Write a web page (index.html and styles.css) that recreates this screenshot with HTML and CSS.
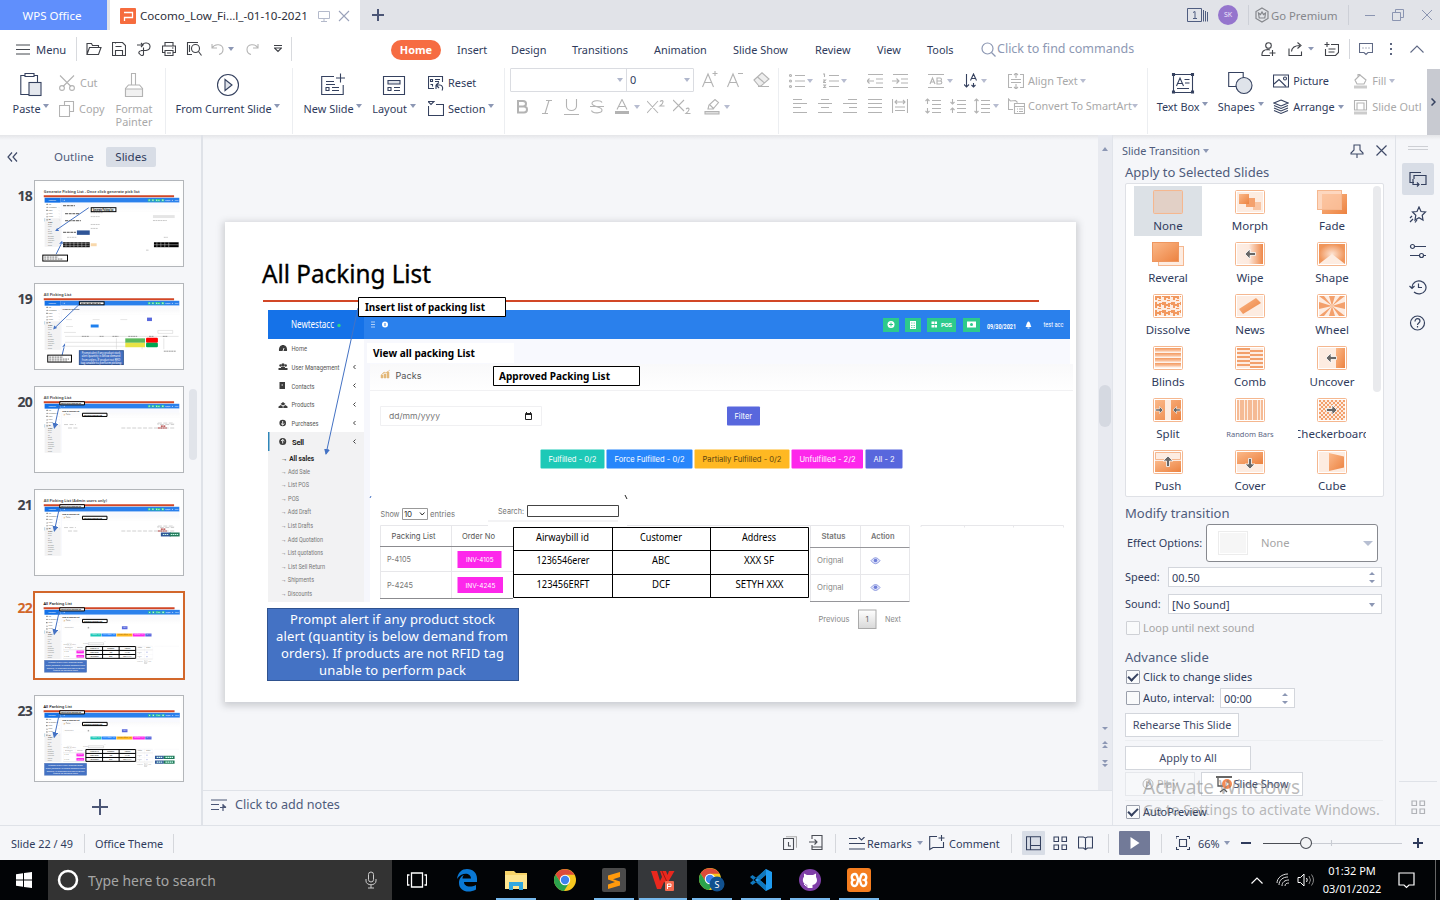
FILE: index.html
```html
<!DOCTYPE html>
<html lang="en">
<head>
<meta charset="utf-8">
<title>WPS Office - Presentation</title>
<link rel="stylesheet" href="styles.css">
</head>
<body>
<header class="titlebar">
  <div class="wps-tab"><span class="t">WPS Office</span></div>
  <div class="doc-tab">
    <svg width="16" height="16" viewBox="0 0 16 16"><rect width="16" height="16" rx="1" fill="#f66c3e"/><path d="M4 4.500h8.500v5H4.500v3.500" fill="none" stroke="#fff" stroke-width="1.300"/></svg>
    <span class="t">Cocomo_Low_Fi...l_-01-10-2021</span>
    <svg width="12" height="12" viewBox="0 0 12 12" fill="none" stroke="#b4bacb"><path d="M.5 1.500h11v7h-11zM6 8.500v3M3 11.500h6"/></svg>
    <svg width="12" height="12" viewBox="0 0 12 12" fill="none" stroke="#9aa2ba" stroke-width="1.100"><path d="M1 1l10 10M11 1L1 11"/></svg>
  </div>
  <svg class="plus-tab" width="12" height="12" viewBox="0 0 12 12" stroke="#4b5676" stroke-width="2"><path d="M0 6h12M6 0v12"/></svg>
  <div class="title-right">
    <svg width="21" height="15" viewBox="0 0 21 15" fill="none" stroke="#4f5d80"><path d="M.5.500h14v13H.500zM16.500 2v11.500M18.500 3v10.500M20.500 4v9.500"/><path d="M6 4.500l2-1v7M6 10.500h4"/></svg>
    <span class="avatar">SK</span>
    <i class="sep"></i>
    <svg width="14" height="16" viewBox="0 0 14 16" fill="none" stroke="#85878c" stroke-width="1.200"><path d="M7 1l6 3.500v7L7 15l-6-3.500v-7z"/><path d="M3.500 6l2 1.500L7 5l1.500 2.500 2-1.500-.7 5H4.200z"/></svg>
    <span class="t prem">Go Premium</span>
    <i class="sep"></i>
    <svg width="68" height="12" viewBox="0 0 68 12" fill="none" stroke="#8b95b1"><path d="M0 6.500h10M27.500 3.500h8v8h-8zM30.500 3.500v-3h8v8h-3M57 1l10 10M67 1L57 11"/></svg>
  </div>
</header>

<nav class="menubar">
  <div class="menu-btn">
    <svg width="14" height="11" viewBox="0 0 14 11" stroke="#45484f"><path d="M0 1h14M0 5.500h14M0 10h14"/></svg>
    <span class="t">Menu</span>
  </div>
  <div class="quick">
    <svg width="16" height="14" viewBox="0 0 16 14"><path d="M1 12.500V1.500h4.500l1 2h6v2M1 12.500l2.500-7h11.500l-2.500 7z"/></svg>
    <svg width="14" height="14" viewBox="0 0 14 14"><path d="M.5.500h10l3 3v10H.500zM3.500 4.500h6M3.500 13V8.500h7V13M3.500 .500v1"/></svg>
    <svg width="15" height="14" viewBox="0 0 15 14"><path d="M1 3h6M5 1l2 2-2 2M7 2.500C7.500 1 9 .8 10.500 1c5 .7 4.500 7-.5 7.500H5M7.500 5.500v7C7 14 4.500 13.700 4 12.200M6.500 8.500c-4 0-4.500 3-2.500 3.500"/></svg>
    <svg width="14" height="14" viewBox="0 0 14 14"><path d="M3 4V.500h8V4M3 10.500H.500v-6.500h13v6.500H11M3 8.500h8v5H3zM5 11h4M10 6h1.500"/></svg>
    <svg width="16" height="14" viewBox="0 0 16 14"><path d="M12 .500H1.500v12H6M3.500 3v7"/><circle cx="9.500" cy="6.500" r="4"/><path d="M12.500 9.500l3 4"/></svg>
    <div class="undo"><svg class="dim" width="13" height="12" viewBox="0 0 13 12"><path d="M1 1v4h5M1 5c3-5 11-4 11 1.500 0 2.500-2 4.500-4 5"/></svg><b class="c"></b></div>
    <svg class="dim" width="13" height="12" viewBox="0 0 13 12"><path d="M12 1v4H7M12 5C9 0 1 1 1 6.500 1 9 3 11 5 11.500"/></svg>
    <svg width="8" height="8" viewBox="0 0 8 8"><path d="M0 .500h8M.5 3L4 6.500 7.500 3z"/></svg>
  </div>
  <div class="tabs">
    <span class="t home">Home</span><span class="t">Insert</span><span class="t">Design</span><span class="t">Transitions</span><span class="t">Animation</span><span class="t">Slide Show</span><span class="t">Review</span><span class="t">View</span><span class="t">Tools</span>
  </div>
  <div class="find">
    <svg width="15" height="15" viewBox="0 0 15 15" fill="none" stroke="#8d98b3" stroke-width="1.200"><circle cx="6.500" cy="6.500" r="5.500"/><path d="M10.500 10.500l4 4"/></svg>
    <span class="t">Click to find commands</span>
  </div>
  <div class="menu-right">
    <svg width="15" height="15" viewBox="0 0 15 15"><circle cx="7.500" cy="3.500" r="2.800"/><path d="M9 13.500H1c-.5-4 2-6 6-6l2 .5M11.500 8v6M8.500 11h6"/></svg>
    <svg width="15" height="14" viewBox="0 0 15 14"><path d="M1 6.500v7h12.500v-4M3.500 9.500C4 5 7 3.500 12 3.500M9.500.500l3.500 3-3.500 3"/></svg>
    <svg class="car" width="6" height="4" viewBox="0 0 6 4"><path d="M0 0h6L3 3.500z"/></svg>
    <svg width="15" height="14" viewBox="0 0 15 14"><path d="M3 0v5M.500 2.500h5M7 2.500h7.500v8l-3 3h-10V7M4.500 7h7M4.500 10h6"/></svg>
    <i class="sep"></i>
    <svg class="slate" width="14" height="13" viewBox="0 0 14 13"><path d="M.500.500h13v9H9l-2 2-2-2H.500z"/><path stroke-dasharray="1 2" d="M3.500 5h8"/></svg>
    <svg class="dots" width="3" height="13" viewBox="0 0 3 13"><path d="M0 0h2v2H0zM0 5h2v2H0zM0 10h2v2H0z"/></svg>
    <svg class="slate" width="14" height="8" viewBox="0 0 14 8"><path d="M.500 7.500L7 1l6.500 6.500"/></svg>
  </div>
</nav>

<section class="ribbon">
  <div class="g g-clip">
    <div class="big">
      <svg width="22" height="24" viewBox="0 0 22 24"><path d="M5 2.500H.800v19H9M14 2.500h3.500V9M5 .500h9v3H5z"/><rect x="9" y="9.500" width="12" height="13" fill="#e5e8ee"/></svg>
      <span class="t">Paste <b class="c"></b></span>
    </div>
    <div class="stack dis">
      <div><svg width="17" height="16" viewBox="0 0 17 16"><path d="M1 .500l11 11M15 .500l-11 11"/><circle cx="3" cy="13" r="2.400"/><circle cx="13" cy="13" r="2.400"/></svg><span class="t">Cut</span></div>
      <div><svg width="16" height="16" viewBox="0 0 16 16"><path d="M5.500 5V.500h9v10H10M.500 4.500h10v11H.500z"/></svg><span class="t">Copy</span></div>
    </div>
    <div class="big dis painter">
      <svg width="20" height="25" viewBox="0 0 20 25"><path d="M7.500 12V.500h4V12M1.500 23.500v-8l3-3.500h11l3 3.500v8z"/><path d="M1.500 16h17v7.500h-17z" fill="#f1f1f1"/></svg>
      <span class="t">Format<br>Painter</span>
    </div>
  </div>
  <div class="g g-play">
    <div class="big">
      <svg width="24" height="24" viewBox="0 0 24 24"><circle cx="12" cy="12" r="10.500"/><path d="M9 6.500v11L16 12z" fill="#dfe3ea"/></svg>
      <span class="t">From Current Slide <b class="c"></b></span>
    </div>
  </div>
  <div class="g g-slides">
    <div class="big">
      <svg width="24" height="24" viewBox="0 0 24 24"><path d="M13 3.500H.700v18h21.500V12M19.500.500v9M15 5h9M5 8.500h8M5 11.500h9M5 14.500h3v3H5zM11 14.500h7M11 17.500h7"/></svg>
      <span class="t">New Slide <b class="c"></b></span>
    </div>
    <div class="big">
      <svg width="24" height="24" viewBox="0 0 24 24"><path d="M1.500 3.500h21v18h-21zM6 14.500h3v3H6zM12 14.500h6M12 17.500h6"/><path d="M6 7.500h12v3.500H6z" fill="#dfe3ea"/></svg>
      <span class="t">Layout <b class="c"></b></span>
    </div>
    <div class="stack">
      <div><svg width="16" height="16" viewBox="0 0 16 16"><path d="M6 13.500H.500V1.500h14V7M2.500 4.500h2v2h-2zM7 4.500h5M7 6.500h4M2.500 9.500h2v2M8 10v4M8 10h4c3 0 3 4 2 5.500M8 10l3-2.500M8 10l3 3"/></svg><span class="t">Reset</span></div>
      <div><svg width="16" height="16" viewBox="0 0 16 16"><path d="M0 .500h6L3 3.500zM8 3.500h8M.500 5v9.500h15V4"/></svg><span class="t">Section <b class="c"></b></span></div>
    </div>
  </div>
  <div class="g g-font">
    <div class="combo"><span><b class="c"></b></span><span class="t">0<b class="c"></b></span></div>
    <div class="r font1 dis">
      <svg width="16" height="18" viewBox="0 0 16 18"><path d="M.500 16L6 3l5.500 13M2.500 11.500h7M13 0v5M10.500 2.500h5"/></svg>
      <svg width="16" height="18" viewBox="0 0 16 18"><path d="M.500 16L6 3l5.500 13M2.500 11.500h7M11 2.500h5"/></svg>
      <svg width="17" height="16" viewBox="0 0 17 16"><path d="M1 8L9 .800 16 7l-8 7H6zM4.500 5l7 6M5 14.500h11" fill="#eee"/></svg>
    </div>
    <div class="r font2 dis">
      <svg width="12" height="14" viewBox="0 0 12 14"><path d="M2 1h5c4 0 4 5.500 0 5.500H2zM2 6.500h6c4 0 4 6 0 6H2z" stroke-width="2"/></svg>
      <svg width="10" height="14" viewBox="0 0 10 14"><path d="M4 .500h6M0 13.500h6M7 .500l-4 13"/></svg>
      <svg width="15" height="16" viewBox="0 0 15 16"><path d="M2.500 0v7c0 6 10 6 10 0V0M0 15.500h15"/></svg>
      <svg width="14" height="14" viewBox="0 0 14 14"><path d="M12 2.500C11 0 2 0 2 3.500S12 6.500 12 10s-9 4-10.500.500M0 6.500h14"/></svg>
      <svg width="14" height="15" viewBox="0 0 14 15"><path d="M2 10.500L7 .500l5 10M3.500 7.500h7"/><path d="M0 13.500h14" stroke-width="3"/></svg>
      <b class="c"></b>
      <svg width="18" height="14" viewBox="0 0 18 14"><path d="M0 1l11 12M11 1L0 13M13 1.500c3-2.500 5 .5 0 4.500h4.500"/></svg>
      <svg width="18" height="15" viewBox="0 0 18 15"><path d="M0 1l11 11M11 1L0 12M13 10c3-2.500 5 .5 0 4.500h4.500"/></svg>
      <svg width="16" height="16" viewBox="0 0 16 16"><path d="M4 10l1-4 6-5.500 3.500 3-5.500 6.500zM6 6l4 4"/><path d="M1 12.500h14v2.500H1z" fill="#ddd"/></svg>
      <b class="c"></b>
    </div>
  </div>
  <div class="g g-para">
    <div class="r para1 dis">
      <svg width="16" height="16" viewBox="0 0 16 16"><path d="M6 2.500h10M6 8h10M6 13.500h10"/><circle cx="1.500" cy="2.500" r="1"/><circle cx="1.500" cy="8" r="1"/><circle cx="1.500" cy="13.500" r="1"/></svg><b class="c"></b>
      <svg width="16" height="16" viewBox="0 0 16 16"><path d="M6 2.500h10M6 8h10M6 13.500h10M0 1h1.500v3M0 7h2.500L0 9.500h3M0 12h2.500l-1 1.300 1 1.200H0"/></svg><b class="c"></b>
      <svg width="16" height="16" viewBox="0 0 16 16"><path d="M1 1.500h15M9 6h7M9 10h7M1 14.500h15M0 8h7M2.500 5.500L0 8l2.500 2.500"/></svg>
      <svg width="16" height="16" viewBox="0 0 16 16"><path d="M1 1.500h15M9 6h7M9 10h7M1 14.500h15M0 8h7M4.500 5.500L7 8l-2.500 2.500"/></svg>
      <svg width="16" height="16" viewBox="0 0 16 16"><path d="M0 1.500h16M0 14.500h16M2 11l2.500-6L7 11M3 9h3M9 5h3c2 0 2 3 0 3H9zM9 8h3c2.500 0 2.500 3 0 3H9z"/></svg><b class="c"></b>
      <svg class="dark" width="14" height="16" viewBox="0 0 14 16"><path d="M2.500 1v13M0 11.500L2.500 14 5 11.500M6.500 7.500L9.500 1l3 6.500M7.500 5.500h4M9.500 10v4M7.500 12l2 2 2-2"/></svg><b class="c"></b>
      <svg width="16" height="16" viewBox="0 0 16 16"><path d="M4 1.500H.500v13H4M12 1.500h3.500v13H12M8 0v5M6 2l2-2 2 2M3 6.500h10M3 9.500h10M8 11v5M6 14l2 2 2-2"/></svg>
      <span class="t">Align Text</span><b class="c"></b>
    </div>
    <div class="r para2 dis">
      <svg width="14" height="14" viewBox="0 0 14 14"><path d="M0 .500h9M0 4.500h14M0 8.500h8M0 13.500h14"/></svg>
      <svg width="14" height="14" viewBox="0 0 14 14"><path d="M3 .500h8M0 4.500h14M3 8.500h8M0 13.500h14"/></svg>
      <svg width="14" height="14" viewBox="0 0 14 14"><path d="M5 .500h9M0 4.500h14M6 8.500h8M0 13.500h14"/></svg>
      <svg width="14" height="14" viewBox="0 0 14 14"><path d="M0 .500h14M0 4.500h14M0 8.500h14M0 13.500h14"/></svg>
      <svg width="16" height="14" viewBox="0 0 16 14"><path d="M.500 0v14M15.500 0v14M3 3h10M5 1L3 3l2 2M11 1l2 2-2 2M3 8h10M3 11.500h10"/></svg>
      <svg width="16" height="16" viewBox="0 0 16 16"><path d="M7 2.500h9M7 6.500h9M7 10.500h9M7 14.500h9M2.500 1v5M.500 3l2-2 2 2M2.500 10v5M.500 13l2 2 2-2"/></svg>
      <svg width="16" height="16" viewBox="0 0 16 16"><path d="M7 2.500h9M7 6.500h9M7 10.500h9M7 14.500h9M2.500 1v5M.500 4l2 2 2-2M2.500 10v5M.500 12l2-2 2 2"/></svg>
      <svg width="16" height="16" viewBox="0 0 16 16"><path d="M7 2.500h9M7 6.500h9M7 10.500h9M7 14.500h9M2.500 1v14M.500 3l2-2 2 2M.500 13l2 2 2-2"/></svg><b class="c"></b>
      <svg width="17" height="16" viewBox="0 0 17 16"><path d="M5 11.500H.500V1l2 2 5-.500 2 2M6.500 5.500h10v10h-10zM6.500 8.500h10M9 11h1M11 11h4M9 13.500h1M11 13.500h4"/></svg>
      <span class="t">Convert To SmartArt</span><b class="c"></b>
    </div>
  </div>
  <div class="g g-draw">
    <div class="big">
      <svg width="24" height="24" viewBox="0 0 24 24"><path d="M2.500 3.500h19v18h-19zM1.500 2.500h2v2h-2zM20.500 2.500h2v2h-2zM1.500 20h2v2h-2zM20.500 20h2v2h-2zM5.500 15L9 7l3.500 8M6.500 12.500h5M13.500 8.500h5M14 12h4.500M6 17.500h12"/></svg>
      <span class="t">Text Box <b class="c"></b></span>
    </div>
    <div class="big">
      <svg width="25" height="24" viewBox="0 0 25 24"><path d="M.700 1.500h14.500v14H.700z"/><circle cx="16" cy="14.500" r="8" fill="#dfe3ea"/></svg>
      <span class="t">Shapes <b class="c"></b></span>
    </div>
    <div class="stack">
      <div><svg width="16" height="14" viewBox="0 0 16 14"><path d="M.500 1h15v12H.500z"/><circle cx="12" cy="4.500" r="1.500"/><path d="M1 10l5-4.500 7 7"/></svg><span class="t">Picture</span></div>
      <div><svg width="16" height="16" viewBox="0 0 16 16"><path d="M8 1l7 3-7 3-7-3zM1 6.500l7 3 7-3M1 9l7 3 7-3M1 11.500l7 3 7-3"/></svg><span class="t">Arrange <b class="c m"></b></span></div>
    </div>
    <div class="stack dis out">
      <div><svg width="15" height="16" viewBox="0 0 15 16"><path d="M2 7l5-5 6 5-2 4H4zM5 4V1.500h2.500"/><path d="M1 14h13" stroke-width="3" stroke="#ccc"/></svg><span class="t">Fill <b class="c m"></b></span></div>
      <div><svg width="15" height="16" viewBox="0 0 15 16"><path d="M1.500 11V1.500h12V11M4 11V4h7v7M1 11h13"/><path d="M1 14h13" stroke-width="3" stroke="#ccc"/></svg><span class="t">Slide Outl</span></div>
    </div>
  </div>
  <div class="more"><svg width="5" height="8" viewBox="0 0 5 8"><path d="M.500.500L4 4 .500 7.500" stroke-width="1.500"/></svg></div>
</section>

<main class="main">
  <aside class="left">
    <div class="left-head">
      <svg width="11" height="10" viewBox="0 0 11 10" fill="none" stroke="#3f4a68" stroke-width="1.200"><path d="M5 .500L1 5l4 4.500M10 .500L6 5l4 4.500"/></svg>
      <span class="t">Outline</span><span class="t on">Slides</span>
    </div>
    <div class="thumbs">
      <div class="th"><b>18</b><svg viewBox="0 0 145 82"><rect width="145" height="82" fill="#fff"/><g transform="scale(.17) translate(-225 -222)"><use href="#base"/></g>
        <text x="6.500" y="10" font-size="4" textLength="97" lengthAdjust="spacingAndGlyphs" font-weight="bold" fill="#555">Generate Picking List -  Once click generate pick list</text>
        <path d="M52 25L20 47M19 72l5-10" stroke="#4472c4" fill="none"/><path d="M18 48.500l2-3 2 3zM22 61.500h4l-1-3z" fill="#4472c4"/>
        <rect x="26" y="60" width="27" height="5"/><rect x="118" y="60" width="25" height="5"/><path d="M26 61.500h27M26 63.500h27M118 62.500h25M29 60v5M33 60v5M37 60v5M41 60v5M45 60v5M49 60v5M121 60v5M125 60v5M129 60v5M133 60v5" stroke="#ddd" stroke-width=".5"/><rect x="40" y="48" width="13" height="4.500" fill="#2f5597"/>
        <path d="M26 23h12M28 31h15M28 38h16M26 50h13" stroke="#777" stroke-width="1.300" stroke-dasharray="3 .7"/><path d="M54 34h9M54 42h9M54 46h7M54 30h12M117 38h14M30 55h10M128 55h4M110 68h3" stroke="#bbb" stroke-dasharray="2 .5" stroke-width=".8"/><path d="M117 34h22" stroke="#e5e5e5" stroke-width="3"/><rect x="54" y="61" width="6" height="3" fill="#f8d8ac"/>
        <rect x="54.500" y="25" width="25" height="4" fill="#fff" stroke="#000"/><rect x="5.500" y="73" width="25" height="6" fill="#fff" stroke="#000"/><text x="56" y="28.300" font-size="3" font-weight="bold" textLength="21" lengthAdjust="spacingAndGlyphs">Generate Picking list</text><path d="M7 75h14M7 77h19" stroke="#555" stroke-dasharray="2 .7" stroke-width=".8"/></svg></div>
      <div class="th"><b>19</b><svg viewBox="0 0 145 82"><rect width="145" height="82" fill="#fff"/><g transform="scale(.17) translate(-225 -222)"><use href="#base"/></g>
        <text x="6.500" y="10" font-size="4" font-weight="bold" textLength="28" lengthAdjust="spacingAndGlyphs" fill="#555">All Picking List</text><text x="25.500" y="24" font-size="2.500" font-weight="bold" textLength="17" lengthAdjust="spacingAndGlyphs" fill="#333">View all picking</text>
        <path d="M43 18L18 42M25 70l2-8" stroke="#4472c4"/><path d="M16 44l1-4 3 2.500zM25 62l3-1v-3z" fill="#4472c4"/>
        <rect x="42.500" y="16" width="25" height="3" fill="#fff" stroke="#000"/><path d="M44 17.500h20" stroke="#333" stroke-dasharray="3 .7" stroke-width=".8"/>
        <rect x="111" y="32" width="5" height="3.500" fill="#5867dd"/><rect x="54" y="39" width="8" height="3" fill="#1f80ee"/><path d="M29 34h6M56 34h7M84 34h7M29 41h7M27 47h12M28 51h115M122 45h15v3h-15zM80 53v11M106 53v11M128 53v11M28 57h62M28 61h62" stroke="#ccc" stroke-width=".5" fill="none"/>
        <path d="M45 51h7M63 51h4M76 51h6M92 51h9M113 51h5M127 51h5M128 66h12" stroke="#999" stroke-dasharray="2 .5"/><rect x="89" y="53" width="20" height="4.500" fill="#5cb85c"/><rect x="89" y="57.500" width="20" height="4.500" fill="#e8e345"/><rect x="110" y="52.500" width="12" height="5" rx="1" fill="#f00"/><rect x="110" y="57.500" width="12" height="4.500" rx="1" fill="#00a651"/>
        <rect x="10.500" y="70" width="24" height="7" fill="#fff" stroke="#000"/><path d="M12 72h14M12 74h20M12 76h18" stroke="#555" stroke-dasharray="2 .7" stroke-width=".8"/><rect x="42.500" y="65.500" width="44.500" height="14" fill="#4472c4" stroke="#2f528f"/><g fill="#fff" font-size="2.600"><text x="45" y="69" textLength="39" lengthAdjust="spacingAndGlyphs">Prompt alert if any product stock</text><text x="45" y="72.300" textLength="39" lengthAdjust="spacingAndGlyphs">alert quantity is below demand</text><text x="45" y="75.600" textLength="39" lengthAdjust="spacingAndGlyphs">from orders. If product not RFID</text><text x="44" y="78.900" textLength="41" lengthAdjust="spacingAndGlyphs">tag unable to perform picking</text></g></svg></div>
      <div class="th"><b>20</b><svg viewBox="0 0 145 82"><rect width="145" height="82" fill="#fff"/><g id="th20"><g transform="scale(.17) translate(-225 -222)"><use href="#base"/><use href="#callouts"/></g>
        <path d="M27 36h12M85 39.500h55M31 39.500h10M122 34.500h16v1.500h-16z" stroke="#bbb" stroke-width=".7" stroke-dasharray="4 1.500" fill="none"/><path d="M122 39.500h9M125 37.500h5" stroke="#a33" stroke-width="1.200" stroke-dasharray="2 .5"/></g><text x="6.500" y="10" font-size="4" font-weight="bold" textLength="28" lengthAdjust="spacingAndGlyphs" fill="#555">All Picking List</text></svg></div>
      <div class="th"><b>21</b><svg viewBox="0 0 145 82"><rect width="145" height="82" fill="#fff"/><use href="#th20"/><text x="6.500" y="10" font-size="4" font-weight="bold" textLength="64" lengthAdjust="spacingAndGlyphs" fill="#555">All Picking List (Admin users only)</text><rect x="125" y="41" width="10" height="4" fill="#2f5597"/><rect x="134" y="41" width="10" height="4" fill="#217a5a"/><path d="M127 43h6M135 43h8" stroke="#cfe" stroke-dasharray="1.500 .5"/></svg></div>
      <div class="th sel"><b>22</b><svg viewBox="225 222 851 480"><use href="#slide"/></svg></div>
      <div class="th"><b>23</b><svg viewBox="225 222 851 480"><use href="#slide"/><path d="M923 564h52v20h-52zM923 592h52v20h-52z" fill="#2f5597"/><path d="M975 564h64v20h-64zM975 592h64v20h-64z" fill="#217a5a"/><path d="M933 574h35M985 574h48M933 602h35M985 602h48" stroke="#cfe" stroke-width="7" stroke-dasharray="9 3"/></svg></div>
    </div>
    <i class="left-scroll"></i>
    <svg class="add-slide" width="16" height="16" viewBox="0 0 16 16" stroke="#4b5676" stroke-width="2"><path d="M0 8h16M8 0v16"/></svg>
  </aside>

  <section class="center">
    <div class="stage">
      <div class="canvas">
        <svg class="slide" width="851" height="480" viewBox="225 222 851 480">
          <defs><marker id="ah" viewBox="0 0 6 6" refX="5" refY="3" markerWidth="6" markerHeight="6" orient="auto"><path d="M0 0l6 3-6 3z" fill="#4472c4"/></marker>
          <linearGradient id="pg" x2="0" y2="1"><stop stop-color="#fff"/><stop offset="1" stop-color="#d8d8d8"/></linearGradient>
          <linearGradient id="hg" x2="0" y2="1"><stop stop-color="#f9f9fa"/><stop offset="1" stop-color="#fff"/></linearGradient></defs>
          <g id="slide">
            <rect x="225" y="222" width="851" height="480" fill="#fff"/>
            <text class="ns" x="262" y="283" font-size="25.500" textLength="169" lengthAdjust="spacingAndGlyphs" stroke="#000" stroke-width=".35">All Packing List</text>
            <g id="base">
              <path d="M263 301h776" stroke="#d24726" stroke-width="2" vector-effect="non-scaling-stroke"/>
              <rect x="268" y="310" width="96" height="29" fill="#1572e8"/><rect x="364" y="310" width="706" height="29" fill="#2a80ec"/>
              <rect x="364" y="339" width="706" height="25" fill="#f8f9fe"/>
              <rect x="370" y="364" width="703" height="28" fill="url(#hg)"/><path d="M370 390.500h703" stroke="#f1f1f3"/>
              <path d="M364 339h6v263h-6z" fill="#f6f7fc"/>
              <g class="rb" fill="#fff"><text class="ns" x="291" y="328" font-size="10.500" textLength="43" lengthAdjust="spacingAndGlyphs">Newtestacc</text><circle cx="339" cy="325.500" r="1.700" fill="#2fd18a"/>
              <path d="M371 322h4M371 324.500h4M371 327h4" stroke="#d4e5fb" stroke-width=".8"/><circle cx="385" cy="324.500" r="3"/><path d="M385 323v3" stroke="#2a80ec"/></g>
              <g fill="#2dca8c"><path d="M883 318h16v14h-16zM905 318h16v14h-16zM927 318h29v14h-29zM963 318h17v14h-17z"/></g>
              <circle cx="891" cy="324.500" r="3.500" fill="#fff"/><path d="M889 324.500h4M891 322.500v4" stroke="#2dca8c"/><rect x="910" y="321" width="6" height="8" fill="#fff"/><path d="M911 323h4M911 325.500h4M911 327.500h4" stroke="#2dca8c" stroke-width=".7" stroke-dasharray="1 .5"/>
              <path d="M931.500 321.500h2.500v2.500h-2.500zM934.500 321.500h2.500v2.500h-2.500zM931.500 325h2.500v2.500h-2.500zM934.500 325h2.500v2.500h-2.500z" fill="#fff"/><rect x="967" y="321.500" width="9" height="6" fill="#fff"/><circle cx="971.500" cy="324.500" r="1.500" fill="#2dca8c"/>
              <g class="rb" fill="#fff"><text x="941" y="327" font-size="6" textLength="11" font-weight="bold">POS</text><text x="987" y="328.500" font-size="7" font-weight="bold" textLength="29" lengthAdjust="spacingAndGlyphs">09/30/2021</text><path d="M1025.500 327c1-1 1-5 3-5.500 2 .5 2 4.500 3 5.500zM1027.500 327.500h2v1h-2z"/><text x="1043.500" y="327" font-size="7.500" textLength="20" lengthAdjust="spacingAndGlyphs">test acc</text></g>
              <rect x="268" y="432" width="96" height="170" fill="#f2f2f3"/><rect x="268" y="432" width="1.500" height="19" fill="#2f86b9"/>
              <g class="rb" fill="#555" font-size="7.500">
                <text x="291.500" y="351" textLength="15.500" lengthAdjust="spacingAndGlyphs">Home</text><text x="291.500" y="370" textLength="48" lengthAdjust="spacingAndGlyphs">User Management</text><text x="291.500" y="388.500" textLength="23" lengthAdjust="spacingAndGlyphs">Contacts</text><text x="291.500" y="407" textLength="23" lengthAdjust="spacingAndGlyphs">Products</text><text x="291.500" y="426" textLength="27" lengthAdjust="spacingAndGlyphs">Purchases</text><text x="292" y="444.500" textLength="12" font-weight="bold" fill="#222">Sell</text>
              </g>
              <g class="rb" fill="#777" font-size="7">
                <text x="281" y="461" fill="#222" font-weight="bold" textLength="33" lengthAdjust="spacingAndGlyphs">→ All sales</text><text x="281" y="473.500" textLength="29" lengthAdjust="spacingAndGlyphs">→ Add Sale</text><text x="281" y="487" textLength="28" lengthAdjust="spacingAndGlyphs">→ List POS</text><text x="281" y="500.500" textLength="18" lengthAdjust="spacingAndGlyphs">→ POS</text><text x="281" y="514" textLength="30" lengthAdjust="spacingAndGlyphs">→ Add Draft</text><text x="281" y="528" textLength="32" lengthAdjust="spacingAndGlyphs">→ List Drafts</text><text x="281" y="541.500" textLength="42" lengthAdjust="spacingAndGlyphs">→ Add Quotation</text><text x="281" y="555" textLength="42" lengthAdjust="spacingAndGlyphs">→ List quotations</text><text x="281" y="568.500" textLength="44" lengthAdjust="spacingAndGlyphs">→ List Sell Return</text><text x="281" y="582" textLength="33" lengthAdjust="spacingAndGlyphs">→ Shipments</text><text x="281" y="595.500" textLength="31" lengthAdjust="spacingAndGlyphs">→ Discounts</text>
              </g>
              <g fill="#3c3c3c"><path d="M279 351c-1-8 9-8 8 0z"/><circle cx="283" cy="365" r="1.700"/><circle cx="280.500" cy="365.500" r="1.200"/><circle cx="285.700" cy="365.500" r="1.200"/><path d="M278.500 370v-2h9v2zM281 370v-3h4v3zM279.500 382h5.500v7h-5.500zM280.500 404l2.500-2 2.500 2-2.500 1.500zM278.500 406.500l2.300-1.500 2 1.500v1.500h-4.300zM283.300 406.500l2-1.500 2.200 1.500v1.500h-4.200z"/><circle cx="282.700" cy="423" r="3.300"/><circle cx="282.700" cy="441.500" r="3.500"/></g>
              <path d="M282.700 421v4M281 423.500l1.700 1.500 1.700-1.500M282.700 443.500v-4M281 441l1.700-1.500 1.700 1.500M281.500 385h1.500M283 351l1-3" stroke="#fff" fill="none" stroke-width=".9"/>
              <path d="M355.500 365l-2 2 2 2M355.500 383.500l-2 2 2 2M355.500 402.500l-2 2 2 2M355.500 421l-2 2 2 2M355.500 439.500l-2 2 2 2" fill="none" stroke="#444"/>
            </g>
            <g id="callouts">
              <path d="M358 308L326 454" stroke="#4472c4" marker-end="url(#ah)" vector-effect="non-scaling-stroke"/>
              <rect x="367" y="343" width="147" height="20" fill="#fff"/>
              <path d="M358.500 297.500h147v19h-147zM493.500 366.500h146v19h-146z" fill="#fff" stroke="#000" vector-effect="non-scaling-stroke"/>
              <g class="ns" font-size="11" font-weight="bold"><text x="365" y="311" textLength="120" lengthAdjust="spacingAndGlyphs">Insert list of packing list</text><text x="373" y="357" textLength="102" lengthAdjust="spacingAndGlyphs">View all packing List</text><text x="499" y="380" textLength="111" lengthAdjust="spacingAndGlyphs">Approved Packing List</text></g>
              <path d="M381 378v-3h2v3zM384 378v-4h2v4zM387 378v-6h2v6zM381 375l3-3 2 1 4-3" fill="#e3b878" stroke="#e3b878" stroke-width=".5"/><text class="it" x="395.500" y="378.500" font-size="9" fill="#555" textLength="26" lengthAdjust="spacingAndGlyphs">Packs</text>
            </g>
            <path d="M380.500 406.500h161v19h-161z" fill="none" stroke="#f0f0f2"/>
            <text class="it" x="389" y="419" font-size="8" fill="#777" textLength="51" lengthAdjust="spacingAndGlyphs">dd/mm/yyyy</text>
            <path d="M525.500 413.500h6v6h-6zM525.500 414.500h6M526.500 412v1M530.500 412v1" fill="none" stroke="#222"/>
            <rect x="727" y="406.500" width="33" height="19" rx="1" fill="#5867dd"/><text class="it" x="734.500" y="419" font-size="8" fill="#fff" textLength="17.500" lengthAdjust="spacingAndGlyphs">Filter</text>
            <rect x="540.500" y="449.500" width="64" height="19" rx="1" fill="#1dc9b7"/><rect x="606.500" y="449.500" width="86" height="19" rx="1" fill="#2786fb"/><rect x="694.500" y="449.500" width="95" height="19" rx="1" fill="#ffb822"/><rect x="791.500" y="449.500" width="71.500" height="19" rx="1" fill="#fd27eb"/><rect x="865.500" y="449.500" width="37" height="19" rx="1" fill="#5867dd"/>
            <g class="it" font-size="7.500" fill="#fff"><text x="548.500" y="461.500" textLength="48" lengthAdjust="spacingAndGlyphs">Fulfilled - 0/2</text><text x="614.500" y="461.500" textLength="70" lengthAdjust="spacingAndGlyphs">Force Fulfilled - 0/2</text><text x="702.500" y="461.500" fill="#5b430f" textLength="79" lengthAdjust="spacingAndGlyphs">Partially Fulfilled - 0/2</text><text x="799.500" y="461.500" textLength="56" lengthAdjust="spacingAndGlyphs">Unfulfilled - 2/2</text><text x="873.500" y="461.500" textLength="21" lengthAdjust="spacingAndGlyphs">All - 2</text></g>
            <g class="it" font-size="8" fill="#777"><text x="380.500" y="516.500" textLength="19" lengthAdjust="spacingAndGlyphs">Show</text><text x="404" y="516.500" textLength="8" fill="#333">10</text><text x="430" y="516.500" textLength="25" lengthAdjust="spacingAndGlyphs">entries</text><text x="498" y="513.500" textLength="26" lengthAdjust="spacingAndGlyphs">Search:</text>
            <text x="391.500" y="538.500" textLength="44" lengthAdjust="spacingAndGlyphs" fill="#555">Packing List</text><text x="462" y="538.500" textLength="33" lengthAdjust="spacingAndGlyphs" fill="#555">Order No</text><text x="387" y="562" textLength="24" lengthAdjust="spacingAndGlyphs">P-4105</text><text x="387" y="587.500" textLength="26" lengthAdjust="spacingAndGlyphs">P-4245</text></g>
            <path d="M402.500 508.500h25v11h-25z" fill="none" stroke="#999"/><path d="M420 512.500l2.200 2.500 2.300-2.500M625 495l2 4" fill="none" stroke="#222"/><path d="M527.500 505.500h91v11h-91z" fill="#fff" stroke="#444"/><path d="M370 498l1-2" stroke="#4472c4"/>
            <path d="M380.500 598V525.500H488M451.500 525.500V598M380.500 571.500H513M488 521h130M627 525.500h280M921 527v-1.500h142.500v2M964.500 525.500v2M1013.500 525.500v2" fill="none" stroke="#e7e7ea"/><path d="M380 546.500h133M380 598.500h133" stroke="#8b8b8f"/>
            <rect x="457.500" y="551" width="44" height="17" fill="#fd27eb"/><rect x="457.500" y="577" width="45.500" height="16" fill="#fd27eb"/><g class="it" fill="#fff" font-size="6.500"><text x="466" y="561.500" textLength="27.500" lengthAdjust="spacingAndGlyphs">INV-4105</text><text x="465.500" y="587.500" textLength="30" lengthAdjust="spacingAndGlyphs">INV-4245</text></g>
            <path d="M513.500 527.500h295v70h-295zM513.500 550.500h295M513.500 574.500h295M612.500 527.500v70M710.500 527.500v70" fill="#fff" stroke="#000" vector-effect="non-scaling-stroke"/>
            <g class="ns" font-size="10.300"><text x="536" y="540.500" textLength="53" lengthAdjust="spacingAndGlyphs">Airwaybill id</text><text x="640" y="540.500" textLength="42" lengthAdjust="spacingAndGlyphs">Customer</text><text x="742" y="540.500" textLength="34" lengthAdjust="spacingAndGlyphs">Address</text><text x="536.500" y="563.500" textLength="53" lengthAdjust="spacingAndGlyphs">1236546erer</text><text x="652" y="563.500" textLength="18" lengthAdjust="spacingAndGlyphs">ABC</text><text x="744" y="563.500" textLength="30" lengthAdjust="spacingAndGlyphs">XXX SF</text><text x="536.500" y="587.500" textLength="53" lengthAdjust="spacingAndGlyphs">123456ERFT</text><text x="652" y="587.500" textLength="18" lengthAdjust="spacingAndGlyphs">DCF</text><text x="735.500" y="587.500" textLength="48" lengthAdjust="spacingAndGlyphs">SETYH XXX</text></g>
            <path d="M810.500 525.500V601M860.500 525.500V601M909.500 525.500V601M810 574.500h99M810 525.500h99" stroke="#e7e7ea" fill="none"/><path d="M810 547.500h99.500M810 601.500h99.500" stroke="#96969a"/>
            <g class="it" font-size="7.500" fill="#888"><text x="821.500" y="539" font-weight="600" fill="#777" textLength="24" lengthAdjust="spacingAndGlyphs">Status</text><text x="871" y="539" font-weight="600" fill="#777" textLength="23.500" lengthAdjust="spacingAndGlyphs">Action</text><text x="817" y="563" textLength="26.500" lengthAdjust="spacingAndGlyphs">Orignal</text><text x="817" y="590" textLength="26.500" lengthAdjust="spacingAndGlyphs">Orignal</text><text x="818.500" y="622" textLength="31" lengthAdjust="spacingAndGlyphs">Previous</text><text x="885" y="622" textLength="16" lengthAdjust="spacingAndGlyphs">Next</text></g>
            <path d="M871 560.700q4.500-6 9 0q-4.500 6-9 0zM871 587.500q4.500-6 9 0q-4.500 6-9 0z" fill="#dfe3fa" stroke="#8f9bdf"/><circle cx="875.500" cy="560.500" r="1.800" fill="#6f7fd8"/><circle cx="875.500" cy="587.300" r="1.800" fill="#6f7fd8"/>
            <rect x="858.500" y="610" width="17.500" height="18.500" fill="url(#pg)" stroke="#aaa"/><text class="it" x="865.500" y="622" font-size="7.500" fill="#666">1</text>
            <rect x="267.500" y="608.500" width="251" height="72" fill="#4472c4" stroke="#2f528f"/>
            <g class="ns" font-size="13" fill="#fff"><text x="290" y="624" textLength="205">Prompt alert if any product stock</text><text x="276" y="641" textLength="232">alert (quantity is below demand from</text><text x="281" y="658" textLength="223">orders). If products are not RFID tag</text><text x="319" y="675" textLength="147">unable to perform pack</text></g>
          </g>
        </svg>
      </div>
      <div class="vscroll">
        <svg width="6" height="4" viewBox="0 0 6 4"><path d="M0 4h6L3 0z"/></svg>
        <i></i>
        <svg class="dn" width="6" height="3" viewBox="0 0 6 3"><path d="M0 0h6L3 3z"/></svg>
        <svg class="pg" width="6" height="8" viewBox="0 0 6 8"><path d="M0 3h6L3 0zM0 7h6L3 4z"/></svg>
        <svg class="pg" width="6" height="8" viewBox="0 0 6 8"><path d="M0 0h6L3 3zM0 4h6L3 7z"/></svg>
      </div>
    </div>
    <div class="notes">
      <svg width="16" height="12" viewBox="0 0 16 12" fill="none" stroke="#4b5676" stroke-width="1.200"><path d="M0 1h16M0 5.500h8M0 10.500h8M9 8.500h6M12 6l3 2.500M12 5v7"/></svg>
      <span class="t">Click to add notes</span>
    </div>
  </section>

  <aside class="panel">
    <div class="p-title"><span class="t">Slide Transition <b class="c m"></b></span>
      <svg width="14" height="14" viewBox="0 0 14 14" fill="none" stroke="#3f4a68" stroke-width="1.100"><path d="M4 1h6v5l3 3v1H1V9l3-3zM7 10v4"/></svg>
      <svg width="11" height="11" viewBox="0 0 11 11" stroke="#3f4a68" stroke-width="1.200"><path d="M.500.500l10 10M10.500.500l-10 10"/></svg>
    </div>
    <h2 class="t h-apply">Apply to Selected Slides</h2>
    <div class="gallery">
      <svg width="0" height="0" class="defs"><defs>
        <linearGradient id="o" x2="1" y2="1"><stop stop-color="#fbb98a"/><stop offset="1" stop-color="#ec8240"/></linearGradient>
        <linearGradient id="or"><stop stop-color="#fdeee5"/><stop offset=".45" stop-color="#fdeadf"/><stop offset="1" stop-color="#ee8748"/></linearGradient>
        <linearGradient id="bl" x2="0" y2=".25" spreadMethod="repeat"><stop stop-color="#f3995f"/><stop offset=".5" stop-color="#f9be98"/><stop offset="1" stop-color="#fff"/></linearGradient>
        <radialGradient id="rad"><stop stop-color="#fde3d3"/><stop offset="1" stop-color="#f0955a"/></radialGradient>
        <pattern id="ck" width="4" height="4" patternUnits="userSpaceOnUse"><path d="M0 0h2v2H0zM2 2h2v2H2z" fill="#f2a06c"/></pattern>
        <pattern id="dz" width="9" height="8" patternUnits="userSpaceOnUse"><path d="M0 0h4v2h2v2H4v2H2V3H0zM6 1h3v1H8v3H6zM5 6h3v1H5z" fill="#f2985e"/></pattern>
        <g id="fr"><rect x=".500" y=".500" width="29" height="23" rx="1" fill="#fff" stroke="#f5b78f"/><rect x="2" y="2" width="26" height="20" fill="#fdece1"/></g>
        <path id="al" d="M0 0l5-5v3.500h5.500v3H5V5z" fill="#686868" stroke="#fff" stroke-width=".8"/>
      </defs></svg>
      <div class="fx">
        <div class="on"><svg width="30" height="24"><rect x=".500" y=".500" width="29" height="23" rx="1" fill="#e3cfc3" stroke="#f5b78f"/><rect x="2" y="2" width="26" height="20" fill="#e2d0c6"/></svg><span class="t">None</span></div>
        <div><svg width="30" height="24"><use href="#fr"/><path d="M18 12h8v8h-8z" fill="#f9c5a3"/><path d="M11 8h9v9h-9z" fill="#f4a16d"/><path d="M4 4h10v10H4z" fill="url(#o)"/></svg><span class="t">Morph</span></div>
        <div><svg width="30" height="24"><rect x="5" y="4" width="25" height="20" fill="url(#o)"/><rect x=".500" y=".500" width="24" height="19" fill="#fcc9a9" fill-opacity=".75" stroke="#f5b78f"/></svg><span class="t">Fade</span></div>
        <div><svg width="32" height="24"><rect x="6.500" y="4.500" width="25" height="19" fill="#fdece1" stroke="#f5b78f"/><rect x=".500" y=".500" width="26" height="19" fill="url(#o)" stroke="#ee965f"/></svg><span class="t">Reveral</span></div>
        <div><svg width="30" height="24"><use href="#fr"/><rect x="2" y="2" width="26" height="20" fill="url(#or)"/><use href="#al" x="10" y="12"/></svg><span class="t">Wipe</span></div>
        <div><svg width="30" height="24"><use href="#fr"/><rect x="2" y="2" width="26" height="20" fill="url(#rad)"/><path d="M2 22l13-10 13 10z" fill="#fdece1"/></svg><span class="t">Shape</span></div>
        <div><svg width="30" height="24"><use href="#fr"/><rect x="2" y="2" width="26" height="20" fill="url(#dz)"/></svg><span class="t">Dissolve</span></div>
        <div><svg width="30" height="24"><use href="#fr"/><path d="M4 15L21 4l5 5L8 20z" fill="url(#o)"/></svg><span class="t">News</span></div>
        <div><svg width="30" height="24"><use href="#fr"/><path d="M15 12L2 2h5zM15 12L12 2h6zM15 12l8-10h5zM15 12l13-4v7zM15 12l13 10h-6zM15 12l3 10h-6zM15 12L7 22H2zM15 12L2 15V8z" fill="#f3a06c"/></svg><span class="t">Wheel</span></div>
        <div><svg width="30" height="24"><use href="#fr"/><rect x="2" y="2" width="26" height="20" fill="url(#bl)"/></svg><span class="t">Blinds</span></div>
        <div><svg width="30" height="24"><use href="#fr"/><path d="M2 3h13M2 7h13M2 11h13M2 15h13M2 19h13M15 5h13M15 9h13M15 13h13M15 17h13M15 21h13" stroke="#f2a06c" stroke-width="2"/></svg><span class="t">Comb</span></div>
        <div><svg width="30" height="24"><use href="#fr"/><rect x="19" y="2" width="9" height="20" fill="url(#o)"/><use href="#al" x="9" y="12"/></svg><span class="t">Uncover</span></div>
        <div><svg width="30" height="24"><use href="#fr"/><path d="M2 2h10v20H2zM18 2h10v20H18z" fill="url(#o)"/><use href="#al" transform="translate(20 12) scale(.7)"/><use href="#al" transform="translate(10 12) scale(-.7)"/></svg><span class="t">Split</span></div>
        <div><svg width="30" height="24"><use href="#fr"/><path d="M3 2v20M6 2v20M8 2v20M11 2v20M14 2v20M16 2v20M19 2v20M21 2v20M24 2v20M27 2v20" stroke="#f2a06c" stroke-width="1.300"/></svg><span class="t tiny">Random Bars</span></div>
        <div><svg width="30" height="24"><use href="#fr"/><rect x="2" y="2" width="26" height="20" fill="url(#ck)"/><use href="#al" transform="translate(20 12) scale(-1)"/></svg><span class="t clip">Checkerboard</span></div>
        <div><svg width="30" height="24"><use href="#fr"/><path d="M2.500 2.500h25v7h-25z" fill="none" stroke="#f5b78f"/><path d="M2 11h26v11H2z" fill="url(#o)"/><use href="#al" transform="translate(15 6) rotate(90)"/></svg><span class="t">Push</span></div>
        <div><svg width="30" height="24"><use href="#fr"/><path d="M2 2h26v12H2z" fill="url(#o)"/><use href="#al" transform="translate(15 19) rotate(-90)"/></svg><span class="t">Cover</span></div>
        <div><svg width="30" height="24"><use href="#fr"/><path d="M12 3l15 3.500v11L12 21z" fill="url(#o)"/></svg><span class="t">Cube</span></div>
      </div>
      <i class="g-scroll"></i>
    </div>
    <h2 class="t h-mod">Modify transition</h2>
    <div class="row eff"><label class="t">Effect Options:</label><div class="box"><i></i><span class="t">None</span><b class="c"></b></div></div>
    <div class="row spd"><label class="t">Speed:</label><div class="box"><span class="t">00.50</span><svg width="6" height="11" viewBox="0 0 6 11"><path d="M0 3h6L3 0zM0 8h6l-3 3z"/></svg></div></div>
    <div class="row snd"><label class="t">Sound:</label><div class="box"><span class="t">[No Sound]</span><b class="c"></b></div></div>
    <div class="row chk off"><i></i><span class="t">Loop until next sound</span></div>
    <h2 class="t h-adv">Advance slide</h2>
    <div class="row chk on"><i></i><span class="t">Click to change slides</span></div>
    <div class="row chk auto"><i></i><span class="t">Auto, interval:</span><div class="box"><span class="t">00:00</span><svg width="6" height="11" viewBox="0 0 6 11"><path d="M0 3h6L3 0zM0 8h6l-3 3z"/></svg></div></div>
    <button class="btn reh"><span class="t">Rehearse This Slide</span></button>
    <hr class="h1">
    <button class="btn app"><span class="t">Apply to All</span></button>
    <div class="row last"><button class="btn ply"><svg width="12" height="12" viewBox="0 0 12 12" fill="none" stroke="#bbb"><circle cx="6" cy="6" r="5"/><path d="M4.500 3.500v5l4-2.500z"/></svg><span class="t">Play</span></button><button class="btn shw"><svg width="17" height="17" viewBox="0 0 17 17"><path d="M0 1h16" stroke="#666" stroke-width="2"/><path d="M2 2v8h5M4 16l4-3 3 3" fill="none" stroke="#555" stroke-width="1.300"/><circle cx="11" cy="8" r="5" fill="#f58b56"/><path d="M9.500 5.500v5l4-2.500z" fill="#fff"/></svg><span class="t">Slide Show</span></button></div>
    <hr class="h2">
    <div class="row chk on"><i></i><span class="t">AutoPreview</span></div>
    <div class="watermark"><p>Activate Windows</p><p>Go to Settings to activate Windows.</p></div>
  </aside>

  <aside class="rail">
    <svg width="20" height="4" viewBox="0 0 20 4"><path d="M0 .500h20M0 3.500h20"/></svg>
    <div class="on"><svg width="18" height="18" viewBox="0 0 18 18"><path d="M5 12.500H1V2.500h11M8 16.500l2-2-2-2M4 9v5.500h6M5 9V5.500h12v9h-5"/></svg></div>
    <div><svg width="18" height="18" viewBox="0 0 18 18"><path d="M10 1l2 4.500 4.500.500-3.300 3.200.8 4.800-4-2.300-4 2.300.8-4.800L3.500 6 8 5.500zM3 10l-2 2M4 13l-3 3M8 14l-2 2.500"/></svg></div>
    <div><svg width="18" height="18" viewBox="0 0 18 18"><circle cx="3.500" cy="4.500" r="2"/><circle cx="12.500" cy="13.500" r="2"/><path d="M5.500 4.500H17M1 13.500h9.500M14.500 13.500H17"/></svg></div>
    <div><svg width="18" height="18" viewBox="0 0 18 18"><path d="M3 9.500a7 6.500 0 1 1 2 4.500M.500 8L3 10.500 5.500 8M9.500 5.500v4H13"/></svg></div>
    <div><svg width="18" height="18" viewBox="0 0 18 18"><circle cx="8.500" cy="9" r="7"/><path d="M6 7.500c0-4 5-3.500 5-.5 0 2-2.500 2-2.500 4M8.500 12v1.500"/></svg></div>
    <hr>
    <svg class="apps" width="15" height="15" viewBox="0 0 15 15"><path d="M1 1h4.500v4.500H1zM9 1h4.500v4.500H9zM1 9h4.500v4.500H1zM9 9h4.500v4.500H9z"/></svg>
  </aside>
</main>

<footer class="status">
  <span class="t s1">Slide 22 / 49</span><i class="sep"></i><span class="t s2">Office Theme</span><i class="sep"></i>
  <div class="st-mid">
    <svg width="14" height="15" viewBox="0 0 14 15"><path d="M.500 2.500h10v11H.500zM5.500 6v4H8"/><path d="M3 .700h10.500v11" stroke="#aaa"/></svg>
    <svg width="14" height="16" viewBox="0 0 14 16"><path d="M3 4V.500h10v14H3V10M0 7h8M5.500 4.500L8 7l-2.500 2.500M3 12h10"/></svg>
    <i class="sep"></i>
    <svg class="dk" width="17" height="13" viewBox="0 0 17 13"><path d="M0 1.500h8M0 6.500h16M0 12h16M9.500 0l3 3 3-3"/></svg>
    <span class="t">Remarks</span><b class="c m"></b>
    <svg class="dk" width="16" height="16" viewBox="0 0 16 16"><path d="M8 1.500H.700v13L4 12.500h10.500V7M12.500 0v6M9.500 3h6"/></svg>
    <span class="t cm">Comment</span>
    <i class="sep"></i>
    <div class="nv"><svg class="dk" width="15" height="15" viewBox="0 0 15 15"><path d="M.500.700h14v13H.500zM4.500.700v13M4.500 9.500h10"/></svg></div>
    <svg class="dk" width="15" height="15" viewBox="0 0 15 15"><path d="M1 1h4.500v4.500H1zM9 1h4.500v4.500H9zM1 9h4.500v4.500H1zM9 9h4.500v4.500H9z"/></svg>
    <svg class="dk" width="15" height="15" viewBox="0 0 15 15"><path d="M.500 1h5l2 1 2-1h5v11h-5l-2 1.500-2-1.500h-5zM7.500 2v11"/></svg>
    <i class="sep"></i>
    <div class="play"><svg width="10" height="12" viewBox="0 0 10 12"><path class="solid" d="M.500 0v12L9.500 6z"/></svg></div>
    <i class="sep"></i>
    <svg class="dk" width="14" height="14" viewBox="0 0 14 14"><path d="M3.500 3.500h7v7h-7zM0 3V.500h3M11 .500h2.500V3M13.500 11v2.500H11M3 13.500H.500V11"/></svg>
    <span class="t zm">66%</span><b class="c m"></b>
    <svg class="sign" width="10" height="10" viewBox="0 0 10 10"><path d="M0 5h10"/></svg>
    <svg class="zoom" width="139" height="14" viewBox="0 0 139 14"><path d="M0 7.500h43"/><path class="rest" d="M43 7.500h96M68.500 4v6"/><circle cx="43" cy="7" r="5.500"/></svg>
    <svg class="sign" width="10" height="10" viewBox="0 0 10 10"><path d="M0 5h10M5 0v10"/></svg>
  </div>
</footer>

<footer class="taskbar">
  <div class="start"><svg width="16" height="16" viewBox="0 0 16 16" fill="#fff"><path d="M0 2.200L7 1.200v6.300H0zM8 1l8-1v7.500H8zM0 8.500h7v6.300l-7-1zM8 8.500h8V16l-8-1z"/></svg></div>
  <div class="search"><svg width="22" height="22" viewBox="0 0 22 22"><circle cx="11" cy="11" r="9" fill="none" stroke="#fff" stroke-width="2.500"/></svg><span class="t">Type here to search</span><svg width="12" height="18" viewBox="0 0 12 18" fill="none" stroke="#ccc"><rect x="3.500" y="1" width="5" height="10" rx="2.500"/><path d="M1 8v2c0 5 10 5 10 0V8M6 14v3M3 17h6"/></svg></div>
  <div class="tv"><svg width="20" height="16" viewBox="0 0 20 16" fill="none" stroke="#fff" stroke-width="1.300"><path d="M4.500 1h11v14h-11zM2.500 3h-2v10h2M17.500 3h2v10h-2"/></svg></div>
  <div class="app"><svg width="22" height="24" viewBox="0 0 22 24"><path d="M1 11C2 4 6 1 11 1c6 0 10 4 10 9.500V14H8c0 4.500 6 6 12 3v4.500C12 26 3 23 3 15c0-4 2-7 5-8-1 1-1.500 2-1.500 3.500H15C15 4 5 4 1 11z" fill="#0a78d4"/></svg></div>
  <div class="app u"><svg width="24" height="22" viewBox="0 0 24 22"><path d="M1 2h9l2 2h11v16H1z" fill="#f7d469"/><path d="M1 6h22v14H1z" fill="#fde58f"/><path d="M5 21v-8h14v8h-4v-4H9v4z" fill="#2fa8e0"/></svg></div>
  <div class="app"><svg id="chr" width="22" height="22" viewBox="0 0 22 22"><circle cx="11" cy="11" r="11" fill="#f7c81f"/><path d="M1.500 5.500A11 11 0 0 1 20.500 5.700H11L7 14z" fill="#dd4b3a"/><path d="M1.500 5.500A11 11 0 0 0 10 22l5-8H7z" fill="#2ba24c"/><circle cx="11" cy="11" r="5.200" fill="#fff"/><circle cx="11" cy="11" r="4.200" fill="#3f82ee"/></svg></div>
  <div class="app u"><svg width="24" height="24" viewBox="0 0 24 24"><rect width="24" height="24" rx="2" fill="#4a4a4a"/><path d="M18 4v5l-7 2.300 7 2.200v4L6 21v-4.500l7-2.500-7-2.500V7.500z" fill="#ff9a0c"/></svg></div>
  <div class="app u act"><svg width="24" height="24" viewBox="0 0 24 24"><path d="M0 3h6l3 10 2-4-2-6h6l1.500 4L18 3h5.500L16 16l-3-2-3 7H6z" fill="#e8281e"/><path d="M11 3l5 11" stroke="#a5130d"/><rect x="14" y="13" width="9" height="10" rx="1" fill="#f4694f"/><path d="M16.500 21v-5h3.500v2.500h-3" stroke="#fff" fill="none"/></svg></div>
  <div class="app u"><svg width="26" height="24" viewBox="0 0 26 24"><use href="#chr"/><circle cx="18" cy="16" r="7.500" fill="#11518f"/><text x="15.500" y="19.500" font-size="9" fill="#fff" class="ns">S</text></svg></div>
  <div class="app u"><svg width="24" height="24" viewBox="0 0 24 24"><path d="M17 1l6 3v16l-6 3L6 12z" fill="#1f9cf0"/><path d="M17 1L1 15l2.500 2L17 7zM17 23L1 9l2.500-2L17 17z" fill="#1078bd"/><path d="M17 7v10l-6-5z" fill="#000"/></svg></div>
  <div class="app u"><svg width="22" height="22" viewBox="0 0 22 22"><circle cx="11" cy="11" r="11" fill="#7f3fa8"/><path d="M8.500 19v-3c-6-1-5-7-3.500-8V4.500l3 1.500h6l3-1.500V8c1.500 2 2 7-3.500 8v3z" fill="#fff"/><path d="M5 15l2 2h2" stroke="#fff" fill="none"/></svg></div>
  <div class="app u"><svg width="24" height="24" viewBox="0 0 24 24"><rect width="24" height="24" rx="3" fill="#f47d1f"/><path d="M8 6c3 0 2 6 4 6s1-6 4-6c4 0 4 5 1.500 6 2.500 1 2.500 6-1.500 6-3 0-2-6-4-6s-1 6-4 6c-4 0-4-5-1.500-6C4 11 4 6 8 6z" fill="none" stroke="#fff" stroke-width="2.400"/></svg></div>
  <div class="tray">
    <svg width="12" height="7" viewBox="0 0 12 7" fill="none" stroke="#fff" stroke-width="1.200"><path d="M.500 6.500L6 1l5.500 5.500"/></svg>
    <svg width="14" height="14" viewBox="0 0 14 14" fill="none" stroke="#ddd"><path d="M1 10C1 5 6 1 12 1M3 12c0-5 4-8 9-8M6 13c0-4 3-6 7-6M9 13c0-2 1.500-3 4-3"/></svg>
    <svg width="17" height="14" viewBox="0 0 17 14" fill="none" stroke="#fff"><path d="M1 4.500h2.500L7 1v12L3.500 9.500H1zM9.500 5q1.500 2 0 4"/><path d="M12 3q3 4 0 8M14.500 1.500q4 5.500 0 11" stroke="#888"/></svg>
    <div class="clock t"><span>01:32 PM</span><span>03/01/2022</span></div>
    <svg width="17" height="17" viewBox="0 0 17 17" fill="none" stroke="#fff" stroke-width="1.200"><path d="M1 1h15v12h-5l-2.500 2.500L6 13H1z"/></svg>
    <i></i>
  </div>
</footer>
</body>
</html>
```
FILE: styles.css
```css
* { box-sizing: border-box; }
body {
  margin: 0; width: 1440px; height: 900px; overflow: hidden;
  display: flex; flex-direction: column;
  font-family: "Noto Sans", "Open Sans", sans-serif;
  font-size: 10.900px; line-height: 14px; color: #2f3b5c; background: #f5f6f9;
}
svg { display: block; flex: none; }
.t { white-space: nowrap; }
.ns { font-family: "Noto Sans", sans-serif; }
.rb { font-family: Roboto, sans-serif; }
.it { font-family: Inter, sans-serif; }
h2 { margin: 0; font-weight: 400; font-size: 13.050px; color: #4f5c7c; }
hr { margin: 0; border: 0; height: 1px; background: #eceef1; flex: none; }
.c { display: inline-block; width: 0; height: 0; flex: none; border: 3px solid transparent; border-top: 4px solid #8c97b4; border-bottom: 0; vertical-align: 5px; }
.c.m { vertical-align: 2px; }
.sep { display: block; width: 1px; flex: none; background: #d5d7dc; }
.dis { color: #a9a9a9; }
.dis .c { border-top-color: #b7bcd0; }

/* title bar */
.titlebar { height: 30px; flex: none; background: #e1e3e8; display: flex; align-items: center; }
.wps-tab { width: 107px; height: 30px; background: #608ffc; color: #fff; display: flex; align-items: center; justify-content: center; padding: 1px 3px 0 0; font-size: 11.500px; }
.doc-tab { width: 250px; height: 30px; margin-left: 3px; background: #fff; display: grid; grid-template-columns: 20px 178px 20px 20px; padding: 2px 0 0 10px; align-items: center; font-size: 11.600px; color: #2d2f3a; }
.plus-tab { margin-left: 12px; }
.title-right { margin-left: auto; width: 253px; height: 30px; display: grid; align-items: center; grid-template-columns: 31px 30px 7px 16px 77px 17px 75px; }
.title-right .sep { height: 20px; background: #cdd0d7; }
.avatar { width: 20px; height: 20px; border-radius: 50%; background: #9575cd; color: #eee4fb; font-size: 7px; line-height: 20px; text-align: center; }
.prem { font-size: 11.300px; color: #85878c; padding-top: 2px; }

/* menu row */
.menubar { height: 35px; flex: none; background: #fff; display: grid; grid-template-columns: 77px 215px 99px 590px 280px 1fr; align-items: center; padding-top: 3px; }
.menu-btn { height: 24px; border-right: 1px solid #d8dade; display: flex; align-items: center; padding: 1px 0 0 16px; gap: 6px; font-size: 11.200px; }
.quick { height: 24px; border-right: 1px solid #d8dade; display: grid; grid-template-columns: repeat(5, 25px) 33px 26px 25px; padding-left: 4px; place-items: center; }
.quick svg, .menu-right svg { fill: none; stroke: #3f4147; stroke-width: 1.100; }
.quick svg.dim { stroke: #b5b5b5; }
.undo { display: flex; align-items: center; gap: 4px; }
.tabs { grid-column: 4; display: grid; grid-template-columns: 66px 54px 61px 82px 79px 82px 62px 50px 54px; align-items: center; padding-top: 1px; }
.home { width: 50px; height: 20px; border-radius: 10px; background: #f66c42; color: #fff; font-weight: 700; line-height: 20px; text-align: center; }
.find { display: flex; align-items: center; gap: 1px; color: #8d98b3; font-size: 12.500px; }
.menu-right { display: grid; align-items: center; grid-template-columns: 27px 20px 16px 25px 10px 31px 20px 16px; }
.menu-right .sep { height: 20px; }
.menu-right svg.slate { stroke: #5f6985; }
.menu-right svg.car { fill: #8c97b4; stroke: none; }
.menu-right svg.dots { fill: #5c6680; stroke: none; }

/* ribbon */
.ribbon { height: 70px; flex: none; background: #fff; display: grid; grid-template-columns: 166px 127px 212px 274px 369px 279px 13px; padding-top: 3px; overflow: hidden; }
.ribbon svg { fill: none; stroke: #35415f; stroke-width: 1.100; }
.ribbon .dis svg { stroke: #b3b3b3; }
.ribbon .dis svg.dark { stroke: #35415f; }
.g { height: 66px; border-right: 1px solid #eceef1; display: flex; }
.big { display: flex; flex-direction: column; align-items: center; padding-top: 5px; height: 66px; }
.big .t { margin-top: 5px; line-height: 14px; text-align: center; }
.stack { display: grid; grid-template-rows: 26px 26px; align-content: start; padding-top: 2px; }
.stack > div { display: flex; align-items: center; gap: 4px; }
.g-clip .big { width: 36px; margin-left: 13px; }
.g-clip .stack { margin-left: 10px; width: 50px; }
.g-clip .painter { width: 50px; margin-left: 0; }
.painter .t { line-height: 13px; margin-top: 4px; }
.g-play .big { width: 106px; margin-left: 9px; }
.g-slides .big:nth-child(1) { width: 62px; margin-left: 9px; }
.g-slides .big:nth-child(2) { width: 44px; margin-left: 8px; }
.g-slides .stack { margin-left: 12px; }
.g-font { display: grid; grid-template: 24px 26px / 186px 82px; padding-left: 5px; align-content: start; }
.combo { display: grid; grid-template-columns: 115px 68px; height: 24px; border: 1px solid #dadce1; border-radius: 1px; width: 184px; }
.combo span { display: flex; align-items: center; justify-content: flex-end; padding-right: 3px; }
.combo span + span { border-left: 1px solid #dadce1; justify-content: space-between; padding-left: 3px; width: 67px; }
.combo .c { border-top-color: #b0b7cc; }
.r { display: grid; align-items: center; }
.font1 { grid-template-columns: 25px 26px 20px; padding-left: 6px; }
.font2 { grid-column: 1 / 3; grid-template-columns: 26px 22px 26px 25px 19px 13px 26px 31px 20px 8px; padding: 3px 0 0 6px; }
.g-para { display: grid; grid-template-rows: 25px 26px; align-content: start; }
.para1 { grid-template-columns: 18px 16px 18px 26px 25px 36px 19px 17px 17px 27px 20px 52px 8px; padding-left: 10px; }
.para2 { grid-template-columns: 25px 25px 25px 24px 33px 25px 24px 19px 15px 20px 104px 8px; padding-left: 14px; }
.g-draw { border: 0; overflow: hidden; }
.g-draw .big:nth-child(1) { width: 54px; margin-left: 8px; }
.g-draw .big:nth-child(2) { width: 50px; margin-left: 7px; }
.g-draw .big { padding-top: 3px; }
.g-draw .big .t { margin-top: 5px; }
.g-draw .stack { margin-left: 8px; width: 70px; padding-top: 0; }
.g-draw .stack.out { width: 75px; margin-left: 10px; overflow: hidden; }
.more { background: #c8cad1; height: 66px; display: grid; place-items: center; margin-top: 1px; }

/* workspace */
.main { height: 690px; flex: none; display: flex; background: linear-gradient(#e4e5e8, #f5f6f9 5px); }
.left { width: 203px; border-right: 2px solid #dfe2e8; position: relative; }
.left-head { height: 45px; display: grid; grid-template-columns: 47px 52px 50px; align-items: center; padding: 0 0 2px 7px; font-size: 11.500px; color: #4f5c7c; }
.left-head .on { background: #d8dde6; border-radius: 2px; height: 20px; line-height: 20px; text-align: center; color: #2f3b5c; }
.left-head .t { line-height: 20px; }
.thumbs { display: grid; gap: 16px; }
.th { display: grid; grid-template-columns: 34px 150px; height: 87px; }
.th b { font: 700 14px/32px "Noto Sans", sans-serif; letter-spacing: -.8px; color: #3f434b; text-align: right; padding-right: 2px; }
.th svg { width: 150px; height: 87px; border: 1px solid #b3b6ba; padding: 2px; background: #fdfdfd; font-family: "Noto Sans", sans-serif; }
.th.sel b { color: #d2672b; }
.th.sel svg { border-color: #d2672b; box-shadow: 0 0 0 1px #d2672b; }
.left-scroll { position: absolute; left: 189px; top: 254px; width: 8px; height: 71px; border-radius: 4px; background: #e1e4ea; }
.add-slide { margin: 17px 0 0 92px; }
.center { width: 910px; display: flex; flex-direction: column; border-right: 1px solid #e1e4ea; }
.stage { height: 656px; display: flex; border-bottom: 1px solid #dfe2e8; }
.canvas { width: 895px; padding: 87px 0 0 22px; }
.slide { box-shadow: 0 2px 7px 2px rgba(60, 65, 75, .22); }
.vscroll { width: 14px; background: #e8eaf0; display: flex; flex-direction: column; align-items: center; padding-top: 12px; }
.vscroll svg { fill: #8c97b4; }
.vscroll i { width: 12px; height: 42px; border-radius: 6px; background: #d5d9e1; margin-top: 234px; }
.vscroll .dn { margin-top: 300px; }
.vscroll .pg { margin-top: 11px; }
.notes { height: 34px; display: flex; align-items: center; gap: 8px; padding: 0 0 7px 8px; font-size: 12.600px; color: #4f5c7c; }

/* transition panel */
.panel { width: 283px; border-right: 1px solid #dfe2e8; padding-left: 12px; display: flex; flex-direction: column; position: relative; }
.p-title { height: 28px; display: grid; grid-template-columns: 228px 26px 12px; margin-left: -3px; align-items: center; padding-top: 3px; color: #4f5c7c; }
.h-apply { height: 20px; line-height: 19px; }
.gallery { width: 259px; height: 314px; border: 1px solid #dfe1e6; border-radius: 2px; background: #fff; display: flex; padding: 2px 2px 0 8px; }
.defs { position: absolute; }
.fx { display: grid; grid-template-columns: repeat(3, 82px); grid-auto-rows: 52px; width: 239px; flex: none; }
.fx > div { width: 68px; height: 50px; display: flex; flex-direction: column; align-items: center; padding-top: 4px; overflow: hidden; }
.fx > div.on { background: #dce1e6; }
.fx .t { margin-top: 5px; font-size: 11.500px; }
.fx .tiny { font-size: 7.500px; color: #5b6684; }
.fx .clip { margin-left: -3px; margin-right: -3px; }
.g-scroll { width: 8px; height: 206px; border-radius: 4px; background: #e9eaed; flex: none; }
.h-mod { height: 27px; line-height: 32px; }
.h-adv { height: 29px; line-height: 39px; }
.row { display: flex; align-items: center; height: 20px; flex: none; }
.box { background: #fff; border: 1px solid #d3d6dc; height: 20px; display: flex; align-items: center; justify-content: space-between; padding: 1px 6px 0 3px; }
.box svg { fill: #8c97b4; }
.eff { height: 38px; }
.eff label { width: 81px; padding-left: 2px; }
.eff .box { width: 172px; height: 38px; border-color: #87898f; border-radius: 3px; color: #a5a5a5; justify-content: flex-start; padding: 0 4px 0 11px; font-size: 11.200px; }
.eff .box i { width: 30px; height: 24px; border: 1px solid #ececec; background: #f6f6f6; box-shadow: inset 0 0 0 1px #fff; margin-right: 13px; }
.eff .box .c { margin-left: auto; border-width: 5px 5px 0; border-top-color: #b7bfd2; }
.spd { margin-top: 5px; }
.snd { margin-top: 7px; }
.spd label, .snd label { width: 43px; }
.spd .box, .snd .box { width: 214px; }
.chk i { width: 14px; height: 14px; border: 1px solid #9a9fab; border-radius: 1px; margin: 0 3px 0 1px; background: #f9fafb; flex: none; }
.chk.off { margin-top: 4px; color: #a5a5a5; }
.chk.off i { border-color: #cfd1d6; }
.chk.on i { display: grid; place-items: center; }
.chk.on i::after { content: ""; width: 8px; height: 4px; border: solid #35415f; border-width: 0 0 2px 2px; transform: translateY(-1px) rotate(-45deg); }
.auto { margin-top: 1px; }
.auto .t:first-of-type { width: 77px; }
.auto .box .t:first-of-type { width: auto; }
.auto .box { width: 75px; }
.btn { font: inherit; color: #3f4a68; background: #fff; border: 1px solid #d3d6dc; height: 24px; padding: 0; display: flex; align-items: center; justify-content: center; flex: none; }
.reh { width: 114px; margin-top: 5px; }
.h1 { margin: 3px 12px 0 0; }
.btn.app { width: 126px; margin-top: 5px; }
.last { height: 24px; margin-top: 2px; gap: 6px; }
.btn.ply { width: 70px; background: #f7f8fa; border-color: #e6e8ec; color: #bbb; gap: 3px; }
.shw { width: 102px; gap: 1px; }
.h2 { margin: 4px 12px 1px 0; }
.watermark { position: absolute; left: 30px; top: 640px; color: rgba(120, 120, 120, .5); }
.watermark p { margin: 0; font-size: 19px; line-height: 24px; white-space: nowrap; }
.watermark p + p { font-size: 14.300px; line-height: 22px; }

.rail { width: 44px; display: flex; flex-direction: column; align-items: center; padding-top: 11px; }
.rail div { width: 32px; height: 32px; margin-bottom: 4px; display: grid; place-items: center; }
.rail div.on { background: #d8dde6; border-radius: 2px; margin-top: 13px; }
.rail svg { fill: none; stroke: #35415f; stroke-width: 1.200; }
.rail > svg:first-child { stroke: #cdcfd4; }
.rail hr { width: 38px; background: #dfe2e8; margin-top: 438px; }
.rail .apps { stroke: #b0b2b7; margin-top: 18px; }

/* status bar */
.status { height: 35px; flex: none; border-top: 1px solid #dfe2e8; background: #f5f6f9; display: flex; align-items: center; padding-left: 11px; }
.status .t { padding-top: 2px; }
.status .sep { height: 19px; }
.s1 { width: 73px; }
.s2 { width: 88px; padding-left: 10px; }
.st-mid { margin-left: 609px; display: grid; align-items: center; height: 34px; grid-template-columns: 26px 26px 14px 18px 50px 12px 20px 62px 11px 31px 25px 30px 11px 42px 15px 22px 26px 17px 22px 150px 12px; }
.st-mid svg { fill: none; stroke: #4a4d55; stroke-width: 1.100; }
.st-mid svg.dk { stroke: #35415f; }
.st-mid svg.sign { stroke: #2f3b5c; stroke-width: 2; }
.zoom .rest { stroke: #c9ccd3; }
.zoom circle { fill: #f2f3f5; }
.nv { width: 23px; height: 24px; background: #d8dde6; display: grid; place-items: center; border-radius: 1px; }
.play { width: 31px; height: 24px; background: #727a98; display: grid; place-items: center; border-radius: 1px; }
.play .solid { fill: #fff; stroke: none; }

/* task bar */
.taskbar { height: 40px; flex: none; background: #020406; display: flex; align-items: center; color: #fff; }
.start { width: 48px; display: grid; place-items: center; }
.search { width: 344px; height: 40px; background: #333; display: grid; grid-template-columns: 31px 277px 12px; align-items: center; padding-left: 9px; color: #a6a6a6; font-size: 13.900px; }
.search .t { padding-top: 1px; }
.tv { width: 50px; display: grid; place-items: center; padding-right: 1px; }
.taskbar .app { width: 49px; height: 40px; display: grid; place-items: center; }
.taskbar .u { background: linear-gradient(#76b9ed, #76b9ed) 50% 100% / 40px 2px no-repeat; }
.taskbar .act { background: linear-gradient(#76b9ed, #76b9ed) 50% 100% / 48px 2px no-repeat, #35373a; }
.tray { margin-left: auto; width: 189px; height: 40px; display: grid; grid-template-columns: 25px 21px 20px 70px 1fr 1px; align-items: center; }
.tray > i { width: 1px; height: 40px; background: #666; margin-left: -4px; }
.clock { display: flex; flex-direction: column; align-items: center; line-height: 18px; font-size: 11px; }
.tray .clock + svg { margin-left: 11px; }
```
